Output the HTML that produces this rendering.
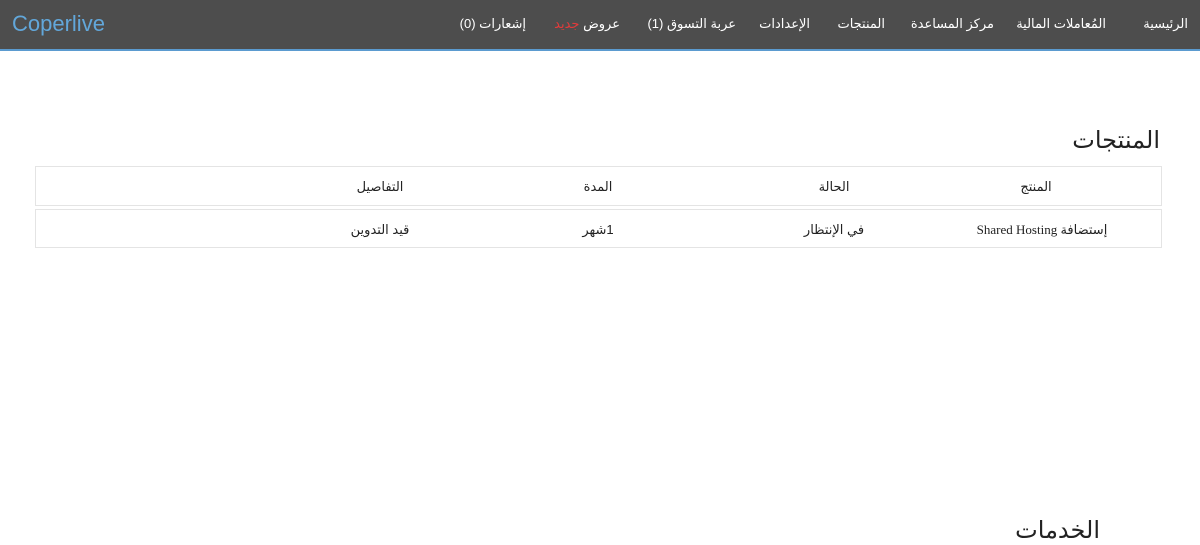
<!DOCTYPE html>
<html dir="rtl"><head><meta charset="utf-8"><style>
body{margin:0;width:1200px;height:522px;overflow:hidden;background:#fff;font-family:"Liberation Sans","DejaVu Sans",sans-serif;position:relative}
.nav{position:absolute;left:0;top:0;width:1200px;height:49px;background:#4d4d4d;border-bottom:2px solid #5b9bd0}
.logo{position:absolute;left:12px;top:11px;font-size:22px;color:#62a7da;font-weight:300;direction:ltr}
.nav span{position:absolute;top:16px;color:#fff;font-size:13px;white-space:nowrap}
h1{position:absolute;right:40px;top:126px;margin:0;font-size:24px;font-weight:normal;color:#222}
.row{position:absolute;left:35px;width:1125px;border:1px solid #e4e4e4}
.c{position:absolute;top:12px;font-size:13px;color:#222;transform:translateX(50%);white-space:nowrap}
</style></head><body>
<div class="nav">
<div class="logo">Coperlive</div>
<span style="right:12px">الرئيسية</span>
<span style="right:94px">المُعاملات المالية</span>
<span style="right:206px">مركز المساعدة</span>
<span style="right:315px">المنتجات</span>
<span style="right:390px">الإعدادات</span>
<span style="right:464px">عربة التسوق (1)</span>
<span style="right:580px">عروض <span style="position:static;color:#e23b3b">جديد</span></span>
<span style="right:674px">إشعارات (0)</span>
</div>
<h1>المنتجات</h1>
<div class="row" style="top:166px;height:38px">
<div class="c" style="right:125px">المنتج</div>
<div class="c" style="right:327px">الحالة</div>
<div class="c" style="right:563px">المدة</div>
<div class="c" style="right:781px">التفاصيل</div>
</div>
<div class="row" style="top:209px;height:37px">
<div class="c" style="right:119px;font-family:'Liberation Serif','DejaVu Sans',serif">إستضافة Shared Hosting</div>
<div class="c" style="right:327px">في الإنتظار</div>
<div class="c" style="right:563px">1شهر</div>
<div class="c" style="right:781px">قيد التدوين</div>
</div>
<div style="position:absolute;right:100px;top:516px;font-size:24px;color:#222">الخدمات</div>
</body></html>
